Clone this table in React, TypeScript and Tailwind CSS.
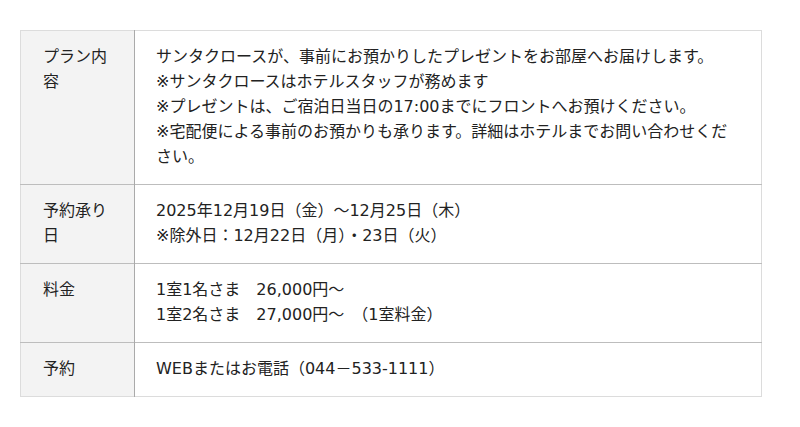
import React from "react"

type Row = {
  label: string
  lines: string[]
}

const rows: Row[] = [
  {
    label: "プラン内容",
    lines: [
      "サンタクロースが、事前にお預かりしたプレゼントをお部屋へお届けします。",
      "※サンタクロースはホテルスタッフが務めます",
      "※プレゼントは、ご宿泊日当日の17:00までにフロントへお預けください。",
      "※宅配便による事前のお預かりも承ります。詳細はホテルまでお問い合わせください。",
    ],
  },
  {
    label: "予約承り日",
    lines: ["2025年12月19日（金）～12月25日（木）", "※除外日：12月22日（月）・23日（火）"],
  },
  {
    label: "料金",
    lines: ["1室1名さま　26,000円～", "1室2名さま　27,000円～　（1室料金）"],
  },
  {
    label: "予約",
    lines: ["WEBまたはお電話（044－533-1111）"],
  },
]

export default function App() {
  return (
    <div
      className="min-h-[427px] bg-white pt-[30px] pl-[20px] text-[16px] leading-[25px] text-[#222]"
      style={{ fontFamily: '"DejaVu Sans", "Noto Sans CJK JP", sans-serif' }}
    >
      <table className="w-[742px] table-fixed border-collapse border border-[#dcdcdc]">
        <colgroup>
          <col className="w-[114px]" />
          <col />
        </colgroup>
        <tbody>
          {rows.map((row, i) => (
            <tr key={i} className={i < rows.length - 1 ? "border-b border-[#bdbdbd]" : ""}>
              <th className="border-r border-[#aaaaaa] bg-[#f3f3f3] px-[22px] pt-[13px] pb-[15px] text-left align-top font-normal">
                {row.label}
              </th>
              <td className="px-[21px] pt-[13px] pb-[15px] align-top">
                {row.lines.map((line, j) => (
                  <p key={j}>{line}</p>
                ))}
              </td>
            </tr>
          ))}
        </tbody>
      </table>
    </div>
  )
}
